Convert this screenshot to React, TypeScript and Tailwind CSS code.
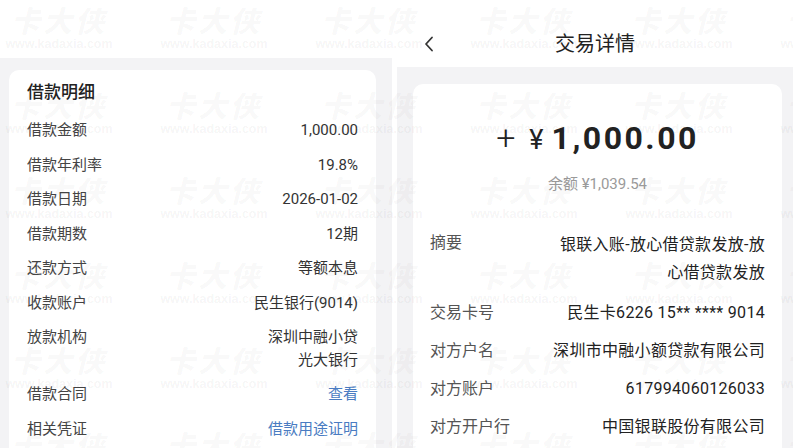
import React from 'react';

const cjk = { fontFamily: 'Roboto, "Noto Sans CJK SC", sans-serif' };

const loanRows: { label: string; value: string[]; link?: boolean }[] = [
  { label: '借款金额', value: ['1,000.00'] },
  { label: '借款年利率', value: ['19.8%'] },
  { label: '借款日期', value: ['2026-01-02'] },
  { label: '借款期数', value: ['12期'] },
  { label: '还款方式', value: ['等额本息'] },
  { label: '收款账户', value: ['民生银行(9014)'] },
  { label: '放款机构', value: ['深圳中融小贷', '光大银行'] },
  { label: '借款合同', value: ['查看'], link: true },
  { label: '相关凭证', value: ['借款用途证明'], link: true },
];

const tradeRows: { label: string; value: string[] }[] = [
  { label: '摘要', value: ['银联入账-放心借贷款发放-放', '心借贷款发放'] },
  { label: '交易卡号', value: ['民生卡6226 15** **** 9014'] },
  { label: '对方户名', value: ['深圳市中融小额贷款有限公司'] },
  { label: '对方账户', value: ['617994060126033'] },
  { label: '对方开户行', value: ['中国银联股份有限公司'] },
];

// faint "卡大侠" watermark grid laid over both screenshots
function Watermarks() {
  const cols = [7, 162, 317, 472, 627, 782];
  const rows = [7, 92, 177, 262, 347, 432];
  return (
    <div className="pointer-events-none absolute inset-0 overflow-hidden">
      {rows.map((y) =>
        cols.map((x) => (
          <div key={x + '-' + y} className="absolute flex w-[104px] flex-col items-center" style={{ left: x, top: y - 6 }}>
            <span
              className="text-[29px] font-black italic leading-[36px] tracking-[3px] text-[rgba(90,70,70,0.04)]"
              style={{ fontFamily: '"Noto Sans CJK SC", sans-serif' }}
            >
              卡大侠
            </span>
            <span
              className="text-[12.5px] font-bold leading-[14px] text-[rgba(0,0,0,0.055)]"
              style={{ fontFamily: '"Liberation Sans", Arial, sans-serif' }}
            >
              www.kadaxia.com
            </span>
          </div>
        ))
      )}
    </div>
  );
}

function LoanPanel() {
  return (
    <div className="flex h-full w-[392px] shrink-0 flex-col">
      <div className="h-[58px] shrink-0 bg-white" />
      <div className="flex flex-1 flex-col bg-[#f3f3f5] pl-[9px] pr-[16px] pt-[12px]">
        <div className="flex-1 rounded-t-[10px] bg-white px-[18px] pt-[10px]">
          <div className="text-[17px] font-medium leading-[24px] text-[#222]">借款明细</div>
          <div className="mt-[9px] flex flex-col">
            {loanRows.map((r) => (
              <div key={r.label} className="flex justify-between py-[6px] text-[15px] leading-[22.5px]">
                <span className="text-[#444]">{r.label}</span>
                <div className="flex flex-col items-end">
                  {r.value.map((v) => (
                    <span key={v} className={r.link ? 'text-[#4a7cc2]' : 'text-[#333]'}>
                      {v}
                    </span>
                  ))}
                </div>
              </div>
            ))}
          </div>
        </div>
      </div>
    </div>
  );
}

function TradePanel() {
  return (
    <div className="flex h-full flex-1 flex-col">
      <div className="relative flex h-[67px] shrink-0 justify-center bg-white pt-[30px]">
        <svg className="absolute left-[27px] top-[36px]" width="10" height="16" viewBox="0 0 10 16" fill="none">
          <path d="M8 1.5 L2 8 L8 14.5" stroke="#333" strokeWidth="1.8" strokeLinecap="round" strokeLinejoin="round" />
        </svg>
        <span className="text-[20px] leading-[28px] text-[#222]">交易详情</span>
      </div>
      <div className="flex flex-1 flex-col bg-[#f3f3f5] pl-[16px] pr-[11px] pt-[17px]">
        <div className="flex-1 rounded-t-[10px] bg-white px-[17px] pt-[33px]">
          <div className="flex items-baseline justify-center leading-[40px] text-[#222]">
            <span className="mr-[14px] text-[34px] font-light">+</span>
            <span className="mr-[8px] text-[27px]">¥</span>
            <span className="text-[32px] font-bold tracking-[2.5px]">1,000.00</span>
          </div>
          <div className="mt-[14px] text-center text-[15px] leading-[20px] text-[#9a9a9a]">余额 ¥1,039.54</div>
          <div className="mt-[30px] flex flex-col">
            {tradeRows.map((r) => (
              <div key={r.label} className="flex justify-between py-[7px] text-[16px]">
                <span className="leading-[24px] text-[#555]">{r.label}</span>
                <div className={'flex flex-col items-end tracking-[0.3px] text-[#222] ' + (r.value.length > 1 ? 'leading-[28px]' : 'leading-[24px]')}>
                  {r.value.map((v) => (
                    <span key={v}>{v}</span>
                  ))}
                </div>
              </div>
            ))}
          </div>
        </div>
      </div>
    </div>
  );
}

export default function App() {
  return (
    <div className="relative flex h-[448px] w-[793px] overflow-hidden bg-white" style={cjk}>
      <LoanPanel />
      <div className="w-[5px] shrink-0 bg-white" />
      <TradePanel />
      <Watermarks />
    </div>
  );
}
